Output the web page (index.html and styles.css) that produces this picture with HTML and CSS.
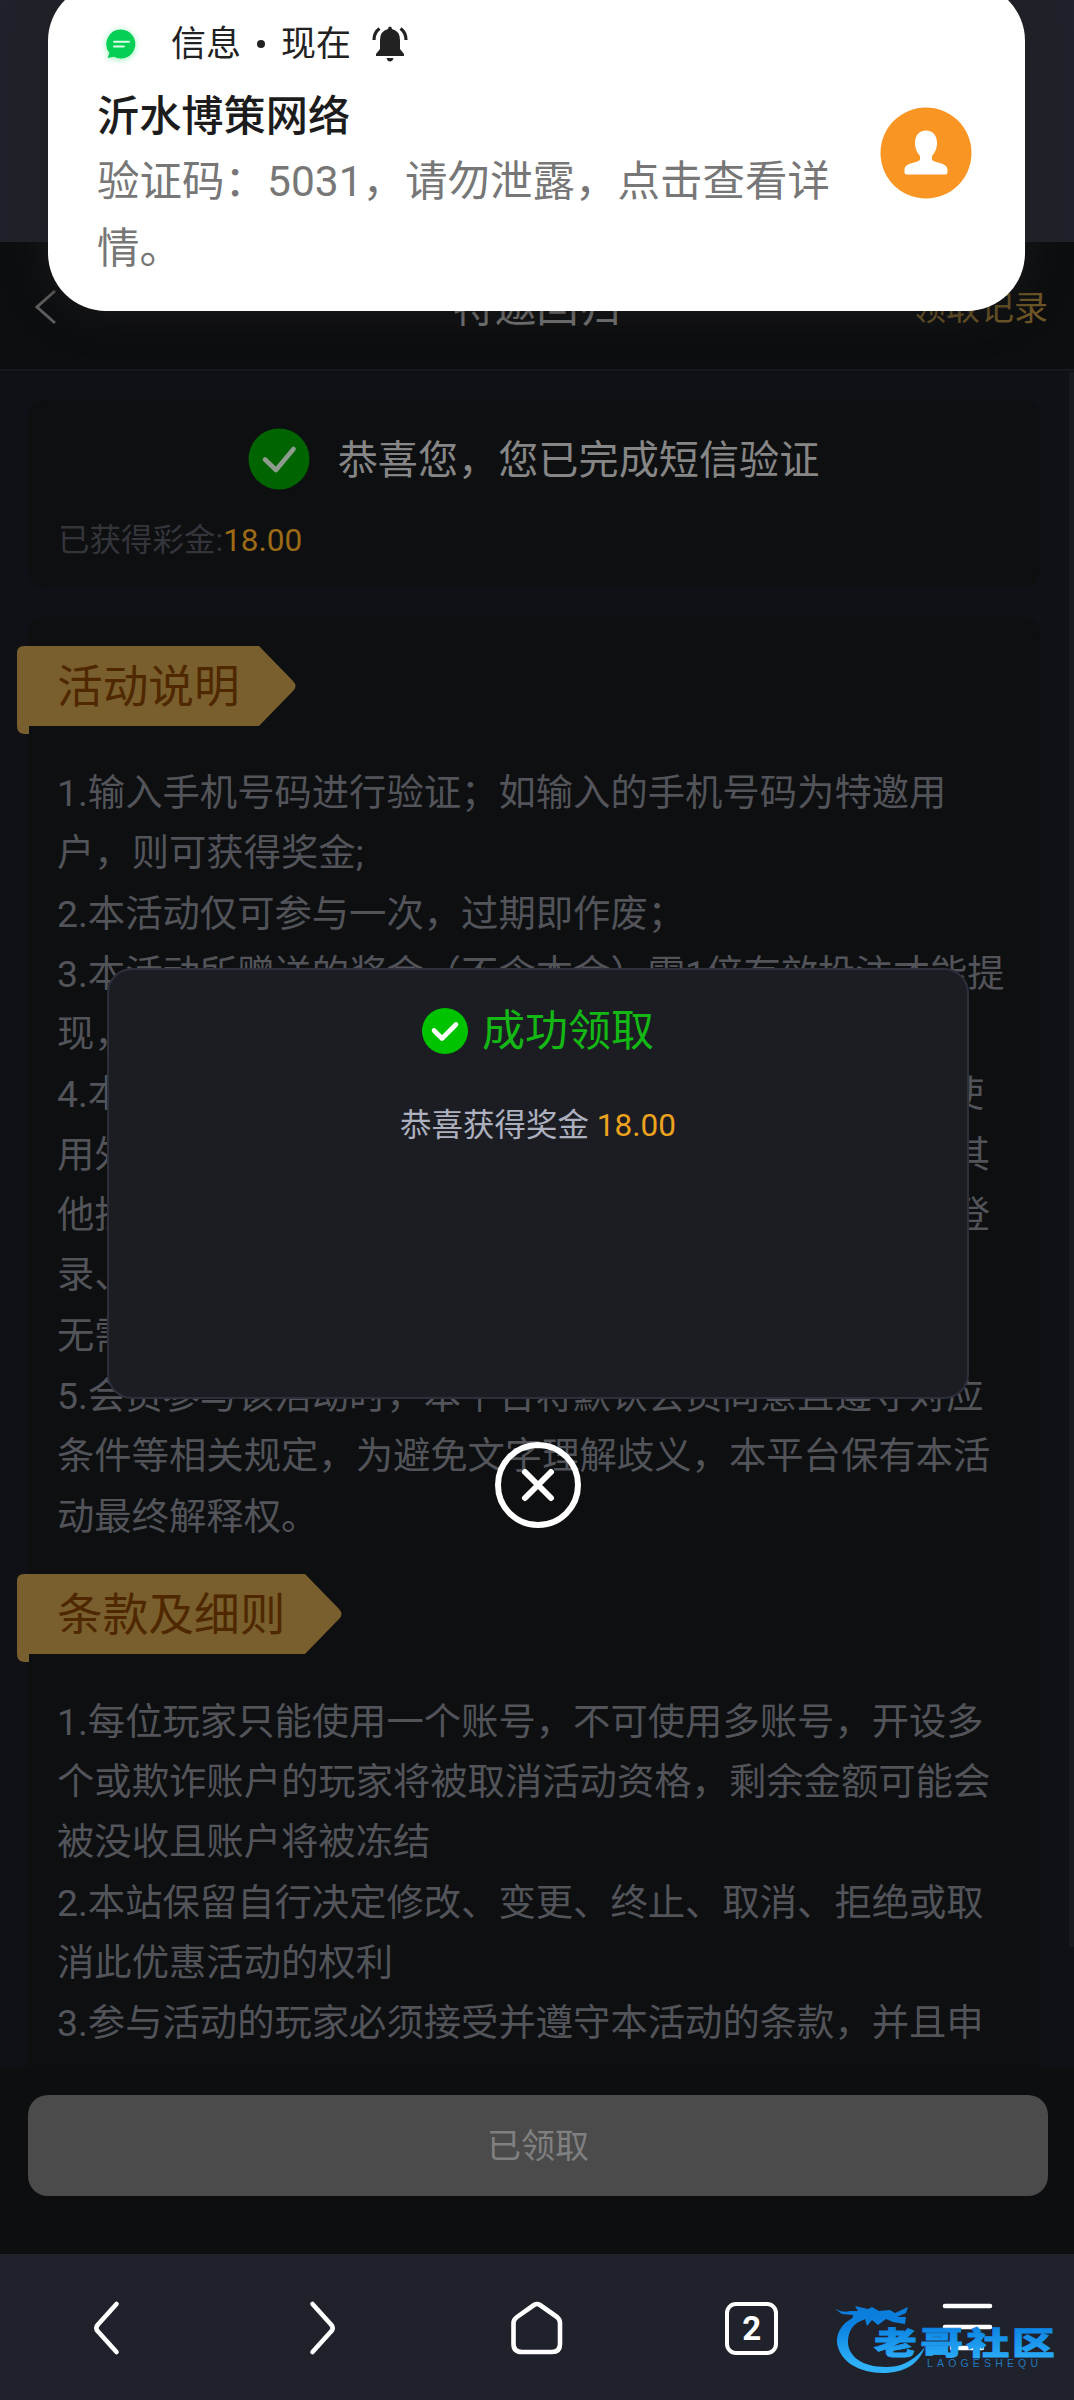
FILE: index.html
```html
<!DOCTYPE html>
<html lang="zh-CN">
<head>
<meta charset="utf-8">
<title>特邀回归</title>
<link rel="stylesheet" href="styles.css">
</head>
<body>
<div class="screen">
  <div class="statusbar"></div>

  <header class="topbar">
    <svg class="topbar-back" width="24" height="38" viewBox="0 0 24 38"><path d="M22 2 4 18l18 16"/></svg>
    <h1 class="topbar-title">特邀回归</h1>
    <a class="topbar-link">领取记录</a>
  </header>

  <main class="content">
    <section class="card status-card">
      <div class="status-row">
        <svg width="62" height="62" viewBox="0 0 62 62"><circle cx="31" cy="31" r="30.5" fill="#006400"/><path d="M17 31.5 28 42l17.500-21" fill="none" stroke="#8d9c8d" stroke-width="4.600" stroke-linecap="round" stroke-linejoin="round"/></svg>
        <span class="status-text">恭喜您，您已完成短信验证</span>
      </div>
      <p class="bonus">已获得彩金:<span class="bonus-value">18.00</span></p>
    </section>

    <section class="card rules-card">
      <h2 class="ribbon">
        <svg class="ribbon-shape" width="279" height="88" viewBox="0 0 279 88"><path d="M7 0H242L276 35Q281 40 276 45L242 80H12V88H8Q0 88 0 80V7Q0 0 7 0Z"/></svg>
        <span class="ribbon-label">活动说明</span>
      </h2>
      <div class="rules">
        <p>1.输入手机号码进行验证；如输入的手机号码为特邀用</p>
        <p>户，则可获得奖金;</p>
        <p>2.本活动仅可参与一次，过期即作废；</p>
        <p>3.本活动所赠送的奖金（不含本金）需1倍有效投注才能提</p>
        <p>现，</p>
        <p class="split split-short"><span>4.本</span><span>使</span></p>
        <p class="split"><span>用外</span><span>其</span></p>
        <p class="split"><span>他技</span><span>登</span></p>
        <p>录、</p>
        <p>无需</p>
        <p>5.会员参与该活动时，本平台将默认会员同意且遵守对应</p>
        <p>条件等相关规定，为避免文字理解歧义，本平台保有本活</p>
        <p>动最终解释权。</p>
      </div>
      <h2 class="ribbon ribbon-second">
        <svg class="ribbon-shape" width="325" height="88" viewBox="0 0 325 88"><path d="M7 0H288L322 35Q327 40 322 45L288 80H12V88H8Q0 88 0 80V7Q0 0 7 0Z"/></svg>
        <span class="ribbon-label">条款及细则</span>
      </h2>
      <div class="rules">
        <p>1.每位玩家只能使用一个账号，不可使用多账号，开设多</p>
        <p>个或欺诈账户的玩家将被取消活动资格，剩余金额可能会</p>
        <p>被没收且账户将被冻结</p>
        <p>2.本站保留自行决定修改、变更、终止、取消、拒绝或取</p>
        <p>消此优惠活动的权利</p>
        <p>3.参与活动的玩家必须接受并遵守本活动的条款，并且申</p>
      </div>
    </section>
    <div class="scrollbar"></div>
  </main>

  <footer class="actions"><button class="claim">已领取</button></footer>

  <nav class="navbar">
    <div class="nav-item"><svg width="54" height="60" viewBox="0 0 54 60"><path d="M36.500 6 18 26.500Q14.500 30 18 33.500L36.500 54"/></svg></div>
    <div class="nav-item"><svg width="54" height="60" viewBox="0 0 54 60"><path d="M17.500 6 36 26.500Q39.500 30 36 33.500L17.500 54"/></svg></div>
    <div class="nav-item"><svg width="54" height="60" viewBox="0 0 54 60"><path d="M24 7Q27 5 30 7L47 19Q50 21.500 50 25V46Q50 54 42 54H12Q3.500 54 3.500 46V25Q3.500 21.500 7 19Z"/></svg></div>
    <div class="nav-item"><span class="tabs">2</span></div>
    <div class="nav-item"><svg width="54" height="60" viewBox="0 0 54 60"><path d="M5 8H50M5 29H50M12 50H42"/></svg></div>
  </nav>

  <div class="dialog">
    <div class="dialog-title">
      <svg width="46" height="46" viewBox="0 0 46 46"><circle cx="23" cy="23" r="23" fill="#00c300"/><path d="M12 22.500 20 30.500 34 16.500" fill="none" stroke="#fff" stroke-width="4.600" stroke-linecap="round" stroke-linejoin="round"/></svg>
      <span>成功领取</span>
    </div>
    <p class="dialog-text">恭喜获得奖金 <span class="dialog-value">18.00</span></p>
  </div>
  <svg class="dialog-close" width="86" height="86" viewBox="0 0 86 86"><circle cx="43" cy="43" r="40"/><path d="M30 30 56 56M56 30 30 56"/></svg>

  <div class="notice">
    <div class="notice-main">
      <div class="notice-head">
        <svg class="notice-app" width="50" height="50" viewBox="0 0 50 50"><path d="M25 10.500A14.500 14.500 0 1 1 18 37.800L11.500 39 13.500 34A14.500 14.500 0 0 1 25 10.500Z" fill="#06cf55"/><path d="M18 22.700H33M18 27.500H28" stroke="#d9ffe6" stroke-width="2" stroke-linecap="round"/></svg>
        <span class="notice-source">信息</span><span class="notice-dot"></span><span class="notice-source">现在</span>
        <svg class="notice-bell" width="36" height="36" viewBox="0 0 36 36"><path d="M16 3Q16 .5 18 .5T20 3Q28 5 28 14V23L32 28V30H4V28L8 23V14Q8 5 16 3ZM14.500 32H21.500Q20.500 35.500 18 35.500T14.500 32Z" fill="#222"/><path d="M7.500 2.500Q2 6.500 2 14M28.500 2.500Q34 6.500 34 14" fill="none" stroke="#222" stroke-width="3.200"/></svg>
      </div>
      <div class="notice-title">沂水博策网络</div>
      <div class="notice-body">验证码：5031，请勿泄露，点击查看详<br>情。</div>
    </div>
    <svg class="notice-avatar" width="92" height="92" viewBox="0 0 92 92"><circle cx="46" cy="46" r="45.500" fill="#f99522"/><path d="M46 23.500C53 23.500 57 28.500 57 36 57 42 54.500 46 52 49V52.500C54 56.500 67 55 67.500 62.500V65Q67.500 67.500 65 67.500H27Q24.500 67.500 24.500 65V62.500C25 55 38 56.500 40 52.500V49C37.500 46 35 42 35 36 35 28.500 39 23.500 46 23.500Z" fill="#fff"/></svg>
  </div>

  <svg class="badge" width="230" height="76" viewBox="0 0 230 76">
    <defs><linearGradient id="blue" x1="0" y1="0" x2="0" y2="76" gradientUnits="userSpaceOnUse"><stop offset="0" stop-color="#0b78d4"/><stop offset=".35" stop-color="#0c83e3"/><stop offset=".85" stop-color="#2fb2fa"/></linearGradient></defs>
    <g fill="url(#blue)">
      <path d="M33 14C12 20 7 32 7 42 9 62 30 73 53 73 74 73 89 64 95 47 82 63 69 67 56 67 32 67 17 56 18 40 19 27 27 21 39 18Z"/>
      <path d="M5 9Q13 13 20 11L28 11 25 6 38 9 42 7 49 11 60 10 65 13 78 7 76 13 67 17 76 17 75 24 63 22 56 19 48 25 42 20 37 26 35 19 27 18 22 21 23 15 12 14Z"/>
      <g class="badge-name" transform="translate(44 0) scale(1.380 1)" stroke="url(#blue)" stroke-width=".8"><text x="0 33.500 67 100" y="54">老哥社区</text></g>
    </g>
    <text class="badge-sub" x="97" y="67" textLength="111">LAOGESHEQU</text>
  </svg>
</div>
</body>
</html>
```

FILE: styles.css
```css
* { box-sizing: border-box; margin: 0; padding: 0; }

body {
  font-family: Roboto, "Noto Sans CJK SC", sans-serif;
  background: #0e0f11;
  text-spacing-trim: space-all;
}

svg { display: block; flex: none; }

.screen {
  position: relative;
  display: flex;
  flex-direction: column;
  width: 1074px;
  height: 2400px;
  overflow: hidden;
}

.statusbar { height: 242px; flex: none; background: #20222b; }

.topbar {
  display: grid;
  grid-template-columns: 1fr auto 1fr;
  align-items: center;
  height: 129px;
  flex: none;
  padding: 4px 26px 0 33px;
  background: #0d0e10;
  border-bottom: 2px solid #17181c;
}
.topbar-back { fill: none; stroke: #606060; stroke-width: 3; }
.topbar-title { margin-left: -8px; font-size: 42px; line-height: 60px; font-weight: 400; color: #7d7d7d; }
.topbar-link { justify-self: end; font-size: 34px; line-height: 50px; color: #6e5727; }

.content {
  position: relative;
  flex: 1;
  display: flex;
  flex-direction: column;
  gap: 30px;
  min-height: 0;
  padding: 29px 34px 0 28px;
  overflow: hidden;
  background: #0f1116;
}
.card { flex: none; background: #0e0f11; border-radius: 16px; }
.status-card { height: 187px; padding: 28px 30px 0; }
.status-row { display: flex; justify-content: center; align-items: center; gap: 28px; padding-right: 1px; }
.status-text { padding-top: 3px; font-size: 40.150px; line-height: 59px; color: #868686; }
.bonus { margin-top: 27px; font-size: 31.500px; line-height: 48px; color: #34353b; }
.bonus-value { color: #9d6b15; }

.rules-card { padding: 29px 30px 0; height: 1500px; white-space: nowrap; }
.ribbon { display: grid; width: max-content; height: 88px; margin-left: -41px; font-weight: 400; }
.ribbon > * { grid-area: 1 / 1; }
.ribbon-shape { fill: #795f2d; }
.ribbon-label { padding: 2px 0 0 40px; font-size: 45.700px; line-height: 80px; color: #4f2800; }
.ribbon-second { margin-top: 27px; }
.rules { margin: 29px 0 0 -1px; font-size: 37.330px; line-height: 60.300px; color: #52545a; }
.ribbon-second + .rules { margin-top: 30px; }
.split { display: flex; justify-content: space-between; width: 933px; }
.split-short { width: 927px; }
.scrollbar { position: absolute; top: 1px; right: 0; width: 5px; height: 1575px; background: #181a20; }

.actions { height: 187px; flex: none; padding: 28px 26px 0 28px; background: #0d0e0f; }
.claim {
  display: block;
  width: 100%;
  height: 101px;
  padding-bottom: 5px;
  border: 0;
  border-radius: 20px;
  background: #4b4b4b;
  color: #808080;
  font: inherit;
  font-size: 34px;
}

.navbar { display: flex; height: 146px; flex: none; padding-top: 2px; background: #20222b; }
.nav-item { flex: 1; display: flex; justify-content: center; align-items: center; }
.nav-item svg { fill: none; stroke: #fff; stroke-width: 4.600; stroke-linecap: round; stroke-linejoin: round; }
.tabs {
  width: 53px;
  height: 53px;
  border: 4.500px solid #fff;
  border-radius: 11px;
  color: #fff;
  font-size: 33px;
  line-height: 45px;
  font-weight: 700;
  text-align: center;
}

.dialog {
  position: absolute;
  left: 107px;
  top: 968px;
  width: 862px;
  height: 431px;
  padding-top: 31px;
  border: 2px solid #2d303b;
  border-radius: 25px;
  background: #1c1d23;
}
.dialog-title { display: flex; justify-content: center; align-items: center; gap: 14px; font-size: 43px; line-height: 60px; color: #14b814; }
.dialog-text { margin-top: 41px; text-align: center; font-size: 31.500px; line-height: 48px; color: #adb1bf; }
.dialog-value { color: #eda31e; }
.dialog-close { position: absolute; left: 495px; top: 1442px; fill: none; stroke: #fff; stroke-width: 6; stroke-linecap: round; }

.notice {
  position: absolute;
  left: 48px;
  top: -17px;
  display: flex;
  justify-content: space-between;
  align-items: center;
  width: 977px;
  height: 328px;
  padding: 17px 53px 0 49px;
  border-radius: 58px;
  background: #fff;
  box-shadow: 0 0 40px rgba(32, 32, 32, .7);
}
.notice-main { align-self: flex-start; }
.notice-head { display: flex; align-items: center; height: 88px; }
.notice-app { margin-right: 25px; margin-left: -1px; filter: drop-shadow(0 1px 3px #8ff0b4); }
.notice-source { padding-top: 2px; font-size: 35px; line-height: 48px; color: #222; }
.notice-dot { width: 8px; height: 8px; margin: 0 16px; border-radius: 50%; background: #222; }
.notice-bell { margin-left: 21px; }
.notice-title { height: 61px; font-size: 42.200px; line-height: 57px; font-weight: 500; color: #1c1c1c; }
.notice-body { font-size: 42.500px; line-height: 66.500px; color: #777; white-space: nowrap; }
.notice-avatar { margin-top: -5px; }

.badge { position: absolute; left: 830px; top: 2300px; }
.badge-name { font-family: "Noto Sans CJK SC", sans-serif; font-size: 31px; font-weight: 900; }
.badge-sub { font-family: "Liberation Sans", sans-serif; font-size: 10.500px; fill: #2377bd; }
```
